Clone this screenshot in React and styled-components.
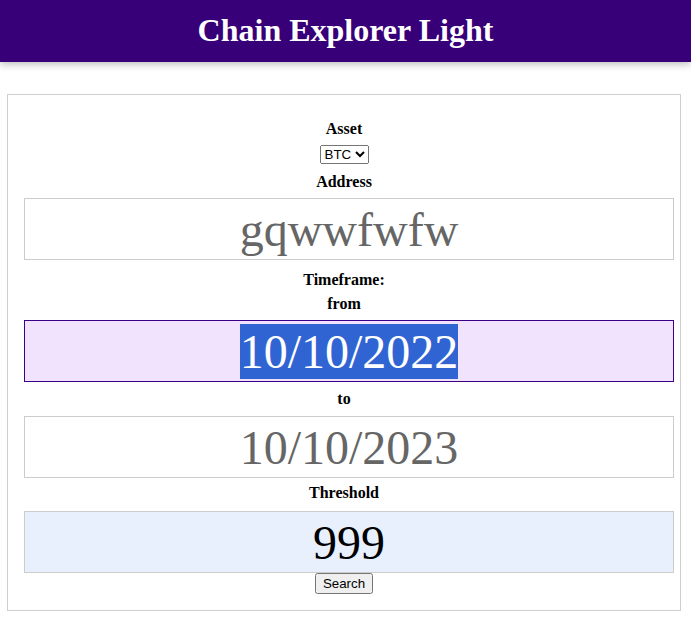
import React, { useEffect, useRef } from "react";
import styled, { createGlobalStyle } from "styled-components";

const GlobalStyle = createGlobalStyle`
	body {
		margin: 0;
		background: #fff;
		font-family: "Liberation Serif", "Times New Roman", serif;
	}
`;

const Header = styled.header`
	height: 62px;
	padding-bottom: 2px;
	box-sizing: border-box;
	background: #380078;
	display: flex;
	align-items: center;
	justify-content: center;
	box-shadow: 0 2px 8px rgba(0, 0, 0, 0.28);
`;

const Title = styled.h1`
	margin: 0;
	color: #fff;
	font-size: 32px;
	font-weight: bold;
`;

const Card = styled.form`
	margin: 32px 10px 0 7px;
	border: 1px solid #cfcfcf;
	padding: 0 0 16px;
	display: flex;
	flex-direction: column;
	align-items: center;
`;

const Label = styled.label`
	display: block;
	margin-top: ${(p) => p.$top || 8}px;
	font-size: 16px;
	font-weight: bold;
	line-height: 18px;
	color: #000;
`;

const Select = styled.select`
	margin-top: 7px;
	font-family: "Liberation Sans", Arial, sans-serif;
	font-size: 13.33px;
`;

const Field = styled.input`
	box-sizing: border-box;
	align-self: stretch;
	margin: ${(p) => p.$top || 7}px 6px 0 16px;
	height: 62px;
	padding: 1px 2px;
	border: 1px solid ${(p) => (p.$active ? "#3a0085" : "#cccccc")};
	outline: none;
	background: ${(p) => (p.$filled ? "#e8f0fe" : p.$active ? "#f1e2fe" : "#fff")};
	color: ${(p) => (p.$filled ? "#000" : "#666")};
	font-family: "Liberation Serif", "Times New Roman", serif;
	font-size: 48px;
	text-align: center;

	&::selection {
		background: #3164d3;
		color: #fff;
	}
`;

const SearchButton = styled.button`
	font-family: "Liberation Sans", Arial, sans-serif;
	font-size: 13.33px;
	padding: 1px 6px;
`;

const App = () => {
	//focus the "from" date and select its text, like the screenshot
	const fromRef = useRef(null);

	useEffect(() => {
		const el = fromRef.current;
		if (el) {
			el.focus();
			el.setSelectionRange(0, el.value.length);
		}
	}, []);

	return (
		<>
			<GlobalStyle />
			<Header>
				<Title>Chain Explorer Light</Title>
			</Header>
			<Card onSubmit={(e) => e.preventDefault()}>
				<Label $top={25}>Asset</Label>
				<Select defaultValue="BTC">
					<option>BTC</option>
					<option>ETH</option>
				</Select>
				<Label $top={9}>Address</Label>
				<Field $top={7} defaultValue="gqwwfwfw" />
				<Label $top={11}>Timeframe:</Label>
				<Label $top={6}>from</Label>
				<Field ref={fromRef} $active defaultValue="10/10/2022" />
				<Label>to</Label>
				<Field $top={8} defaultValue="10/10/2023" />
				<Label $top={6}>Threshold</Label>
				<Field defaultValue="999" $filled $top={9} />
				<SearchButton type="submit">Search</SearchButton>
			</Card>
		</>
	);
};

export default App;
